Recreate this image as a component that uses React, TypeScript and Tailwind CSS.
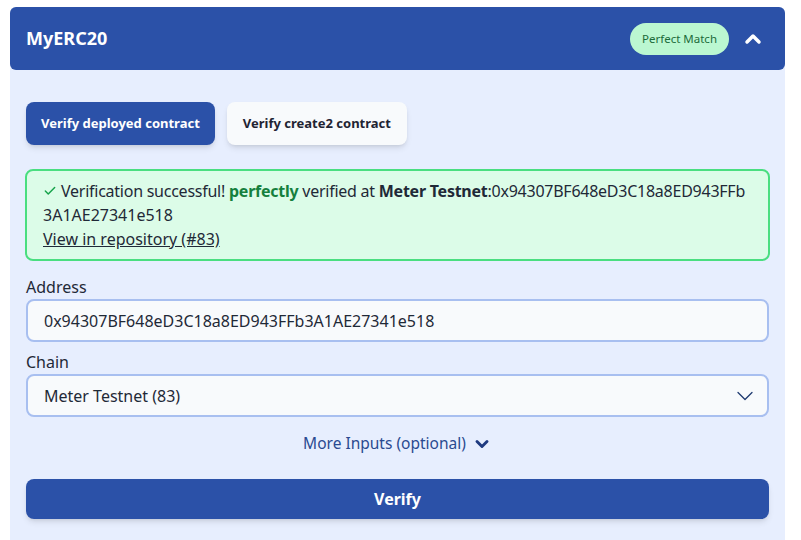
import { ChevronDown, ChevronUp, Check } from "lucide-react";

function App() {
	let address = "0x94307BF648eD3C18a8ED943FFb3A1AE27341e518";

	return (
		<div
			className="w-full h-[540px] bg-white overflow-hidden"
			style={{ fontFamily: '"Noto Sans", "Open Sans", sans-serif' }}
		>
			<div className="ml-[10px] mr-[16px] mt-[7px] h-[533px] bg-[#e7eefe] rounded-t-md flex flex-col">
				{/* header */}
				<div className="h-[63px] bg-[#2b51a8] rounded-md flex items-center px-4 shrink-0">
					<h1 className="text-white font-bold text-[18px] grow">MyERC20</h1>
					<span className="bg-[#bbf7d1] text-[#1c6b3a] text-[11.5px] rounded-full h-[32px] px-3 flex items-center">
						Perfect Match
					</span>
					<ChevronUp className="text-white ml-3 mr-[4px]" size={24} strokeWidth={3.5} />
				</div>

				{/* body */}
				<div className="px-4 pt-8 flex flex-col">
					<div className="flex gap-3">
						<button className="h-[43px] px-[15px] rounded-lg bg-[#2b51a8] text-white font-bold text-[13px] shadow-md">
							Verify deployed contract
						</button>
						<button className="h-[43px] px-[16px] rounded-lg bg-[#f8fafc] text-[#1f2433] font-bold text-[13px] shadow-md">
							Verify create2 contract
						</button>
					</div>

					<div className="mt-[24px] -mx-px border-2 border-[#4ade80] bg-[#dcfce8] rounded-lg px-4 py-[8px] text-[16px] leading-[24px] text-[#1f2937]">
						<p className="whitespace-nowrap tracking-[-0.25px]">
							<Check className="inline text-[#16a34a] mr-1 -mt-1" size={14} strokeWidth={2.5} />
							Verification successful! <b className="text-[#15803d]">perfectly</b> verified at{" "}
							<b>Meter Testnet</b>:{address.slice(0, 28)}
						</p>
						<p>{address.slice(28)}</p>
						<a className="underline">View in repository (#83)</a>
					</div>

					<label className="mt-[14px] text-[16px] text-[#1f2937] leading-[24px]">Address</label>
					<div className="h-[43px] border-2 border-[#a8bff0] bg-[#f8fafc] rounded-lg flex items-center px-4 text-[16px] text-[#1f2937]">
						{address}
					</div>

					<label className="mt-[8px] text-[16px] text-[#1f2937] leading-[24px]">Chain</label>
					<div className="h-[43px] border-2 border-[#a8bff0] bg-[#f8fafc] rounded-lg flex items-center pl-4 pr-2 text-[16px] text-[#1f2937]">
						<span className="grow">Meter Testnet (83)</span>
						<ChevronDown className="text-[#1f3a70]" size={28} strokeWidth={1.1} />
					</div>

					<div className="mt-[15px] flex justify-center items-center gap-1.5 text-[#2a4a90] text-[15.5px]">
						More Inputs (optional)
						<ChevronDown className="text-[#1f3a80]" size={20} strokeWidth={3.5} />
					</div>

					<button className="mt-[24px] h-[40px] rounded-lg bg-[#2b51a8] text-white font-bold text-[16px] shadow-md">
						Verify
					</button>
				</div>
			</div>
		</div>
	);
}

export default App;
